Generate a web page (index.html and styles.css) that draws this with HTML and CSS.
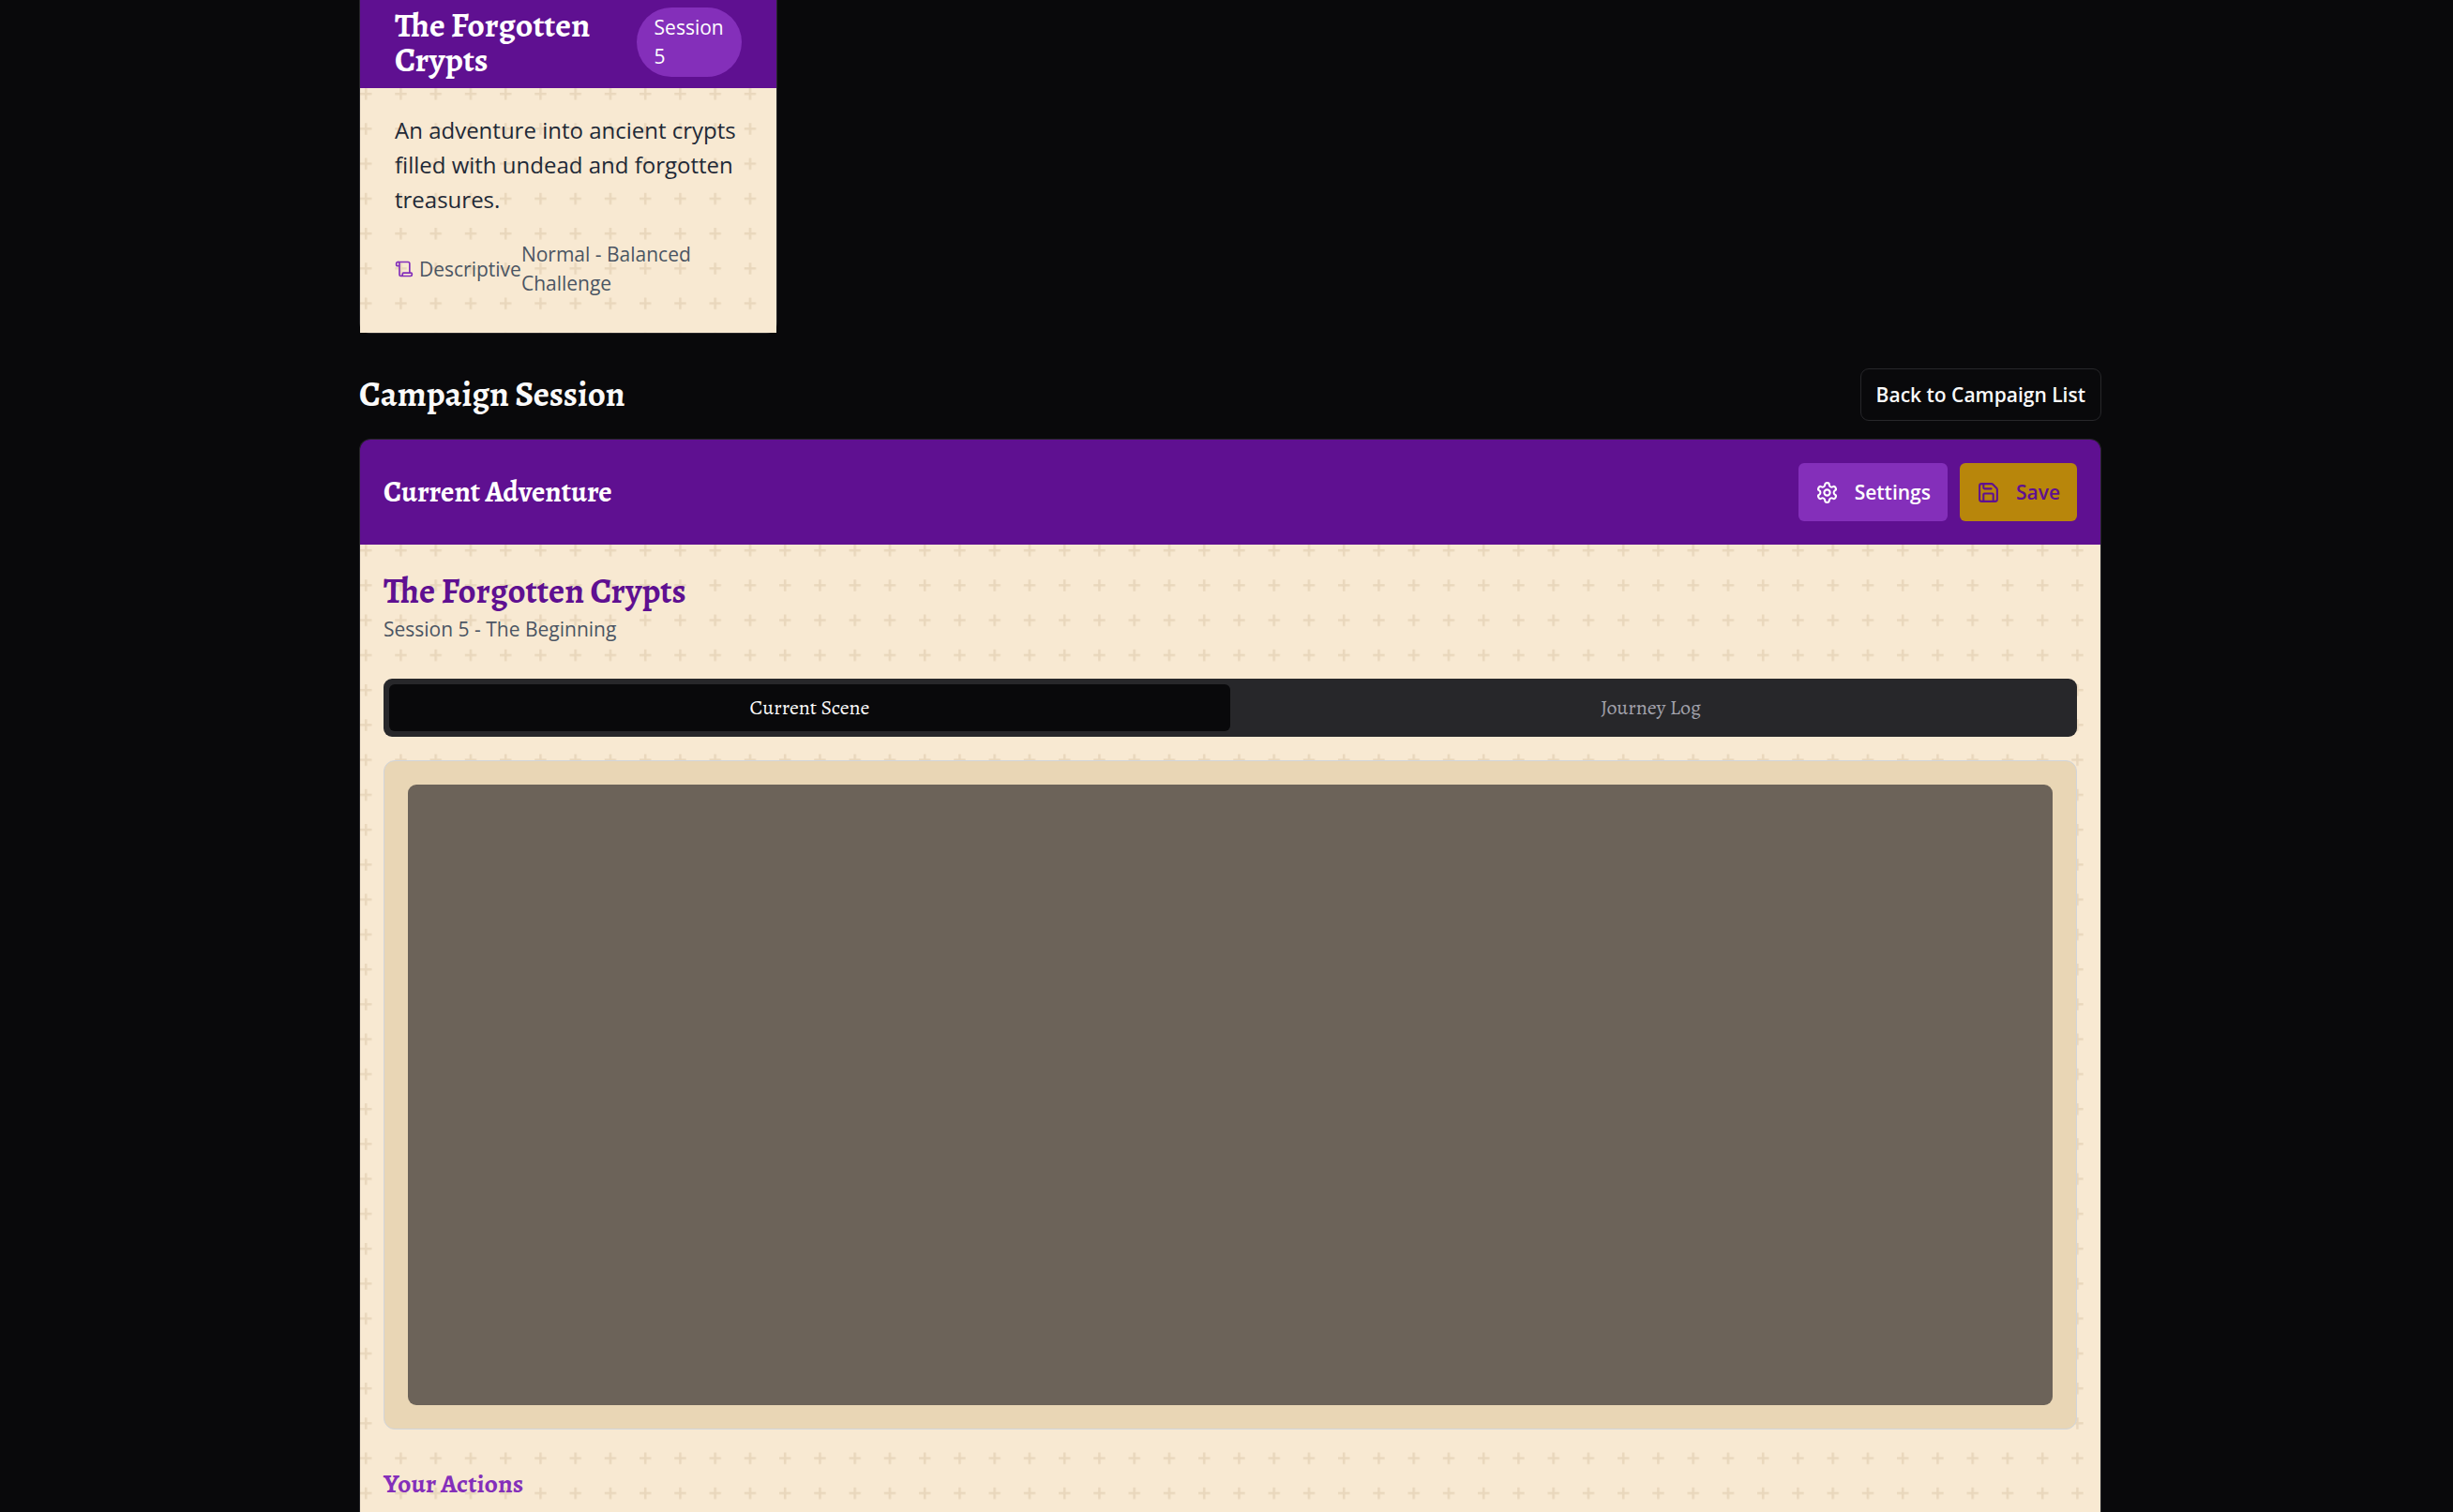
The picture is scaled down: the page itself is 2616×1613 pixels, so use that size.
FILE: index.html
```html
<!DOCTYPE html>
<html lang="en">
<head>
  <meta charset="utf-8">
  <meta name="viewport" content="width=device-width, initial-scale=1">
  <title>Campaign Session</title>
  <link rel="stylesheet" href="styles.css">
</head>
<body>
  <main class="page">
    <section class="campaign-list" aria-label="Campaigns">
      <article class="card campaign">
        <header class="campaign-header">
          <h2 class="campaign-title">The Forgotten Crypts</h2>
          <span class="badge">Session 5</span>
        </header>
        <div class="parchment campaign-body">
          <p class="campaign-text">An adventure into ancient crypts filled with undead and forgotten treasures.</p>
          <div class="campaign-meta">
            <span class="style-label">
              <svg class="icon-small" viewBox="0 0 24 24" aria-hidden="true">
                <path d="M19 17V5a2 2 0 0 0-2-2H4"/>
                <path d="M8 21h12a2 2 0 0 0 2-2v-1a1 1 0 0 0-1-1H11a1 1 0 0 0-1 1v1a2 2 0 1 1-4 0V5a2 2 0 1 0-4 0v2a1 1 0 0 0 1 1h3"/>
              </svg>
              Descriptive
            </span>
            <span>Normal - Balanced Challenge</span>
          </div>
        </div>
      </article>
    </section>

    <div class="page-bar">
      <h1 class="page-title">Campaign Session</h1>
      <button class="button button-outline" type="button">Back to Campaign List</button>
    </div>

    <section class="card adventure">
      <header class="adventure-header">
        <h2 class="adventure-title">Current Adventure</h2>
        <div class="actions">
          <button class="button button-settings" type="button">
            <svg class="icon" viewBox="0 0 24 24" aria-hidden="true">
              <path d="M12.22 2h-.44a2 2 0 0 0-2 2v.18a2 2 0 0 1-1 1.73l-.43.25a2 2 0 0 1-2 0l-.15-.08a2 2 0 0 0-2.73.73l-.22.38a2 2 0 0 0 .73 2.73l.15.1a2 2 0 0 1 1 1.72v.51a2 2 0 0 1-1 1.74l-.15.09a2 2 0 0 0-.73 2.73l.22.38a2 2 0 0 0 2.73.73l.15-.08a2 2 0 0 1 2 0l.43.25a2 2 0 0 1 1 1.73V20a2 2 0 0 0 2 2h.44a2 2 0 0 0 2-2v-.18a2 2 0 0 1 1-1.73l.43-.25a2 2 0 0 1 2 0l.15.08a2 2 0 0 0 2.73-.73l.22-.39a2 2 0 0 0-.73-2.73l-.15-.08a2 2 0 0 1-1-1.74v-.5a2 2 0 0 1 1-1.74l.15-.09a2 2 0 0 0 .73-2.73l-.22-.38a2 2 0 0 0-2.73-.73l-.15.08a2 2 0 0 1-2 0l-.43-.25a2 2 0 0 1-1-1.73V4a2 2 0 0 0-2-2z"/>
              <circle cx="12" cy="12" r="3"/>
            </svg>
            Settings
          </button>
          <button class="button button-save" type="button">
            <svg class="icon" viewBox="0 0 24 24" aria-hidden="true">
              <path d="M15.2 3a2 2 0 0 1 1.4.6l3.8 3.8a2 2 0 0 1 .6 1.4V19a2 2 0 0 1-2 2H5a2 2 0 0 1-2-2V5a2 2 0 0 1 2-2z"/>
              <path d="M17 21v-7a1 1 0 0 0-1-1H8a1 1 0 0 0-1 1v7"/>
              <path d="M7 3v4a1 1 0 0 0 1 1h7"/>
            </svg>
            Save
          </button>
        </div>
      </header>

      <div class="parchment adventure-body">
        <h3 class="adventure-name">The Forgotten Crypts</h3>
        <p class="adventure-session">Session 5 - The Beginning</p>

        <div class="tabs" role="tablist">
          <button class="tab tab-active" type="button" role="tab" aria-selected="true">Current Scene</button>
          <button class="tab" type="button" role="tab" aria-selected="false">Journey Log</button>
        </div>

        <div class="scene" role="tabpanel" aria-label="Current Scene">
          <div class="scene-view"></div>
        </div>

        <h4 class="actions-title">Your Actions</h4>
      </div>
    </section>
  </main>
</body>
</html>
```
FILE: styles.css
```css
:root {
  --background: #09090b;
  --border: #27272a;
  --purple: #5f1091;
  --purple-light: #842fba;
  --gold: #b8860b;
  --parchment: #f8e9d2;
  --parchment-dark: #e9d6b5;
  --serif: "Alegreya", "Liberation Serif", serif;
  --sans: "Segoe UI", "Open Sans", sans-serif;
}

*,
*::before,
*::after {
  box-sizing: border-box;
}

body {
  margin: 0;
  background: var(--background);
  color: #fafafa;
  font-family: var(--sans);
  font-size: 21px;
  line-height: 31px;
}

h1, h2, h3, h4, p {
  margin: 0;
}

h1, h2, h3, h4 {
  font-family: var(--serif);
  font-weight: 700;
}

button {
  border: 0;
  font: inherit;
  cursor: pointer;
}

.page {
  display: flex;
  flex-direction: column;
  min-height: 100vh;
  padding: 0 375px 0 383px;
}

.card {
  border: 1px solid var(--border);
}

.parchment {
  background-color: var(--parchment);
  background-image: url("data:image/svg+xml,%3Csvg xmlns='http://www.w3.org/2000/svg' width='149' height='149' viewBox='0 0 120 120'%3E%3Cdefs%3E%3Cpattern id='p' width='30' height='30' patternUnits='userSpaceOnUse'%3E%3Cpath fill='%23e9d7bc' d='M6 4V0H4v4H0v2h4v4h2V6h4V4H6z'/%3E%3C/pattern%3E%3C/defs%3E%3Crect width='120' height='120' fill='url(%23p)'/%3E%3C/svg%3E");
  background-size: 149px 149px;
}

/* Campaign cards */

.campaign-list {
  display: grid;
  grid-template-columns: repeat(4, 1fr);
  gap: 25px;
}

.campaign {
  border-top: 0;
  border-radius: 0 0 12px 12px;
}

.campaign-header {
  display: flex;
  align-items: center;
  justify-content: space-between;
  gap: 12px;
  padding: 8px 37px 12px;
  background: var(--purple);
}

.campaign-title {
  color: #fff;
  font-size: 36px;
  line-height: 37px;
}

.badge {
  width: min-content;
  padding: 6px 19px;
  border-radius: 38px;
  background: var(--purple-light);
  color: #fff;
}

.campaign-body {
  padding: 26px 37px 37px;
}

.campaign-text {
  color: #1f2937;
  font-size: 24px;
  line-height: 37px;
}

.campaign-meta {
  display: flex;
  align-items: center;
  justify-content: space-between;
  margin-top: 25px;
  color: #4b5563;
}

.style-label {
  display: flex;
  align-items: center;
  gap: 6px;
}

.icon,
.icon-small {
  flex: none;
  fill: none;
  stroke: currentColor;
  stroke-width: 2;
  stroke-linecap: round;
  stroke-linejoin: round;
}

.icon {
  width: 25px;
  height: 25px;
}

.icon-small {
  width: 20px;
  height: 20px;
  color: var(--purple-light);
}

/* Title bar */

.page-bar {
  display: flex;
  align-items: center;
  justify-content: space-between;
  margin: 37px 0 19px;
}

.page-title {
  font-size: 37px;
  line-height: 50px;
}

.button {
  display: flex;
  align-items: center;
  gap: 17px;
  height: 62px;
  padding: 0 18px;
  border-radius: 6px;
  font-weight: 600;
}

.button-outline {
  height: 56px;
  padding: 0 16px;
  border: 1px solid var(--border);
  border-radius: 9px;
  background: var(--background);
  color: #fafafa;
}

.button-settings {
  background: var(--purple-light);
  color: #fff;
}

.button-save {
  background: var(--gold);
  color: var(--purple);
}

/* Current adventure */

.adventure {
  display: flex;
  flex: 1;
  flex-direction: column;
  overflow: hidden;
  border-bottom: 0;
  border-radius: 12px 12px 0 0;
}

.adventure-header {
  display: flex;
  align-items: center;
  justify-content: space-between;
  padding: 25px;
  background: var(--purple);
}

.adventure-title {
  color: #fff;
  font-size: 31px;
  line-height: 43px;
}

.actions {
  display: flex;
  gap: 13px;
}

.adventure-body {
  flex: 1;
  padding: 25px 25px 0;
}

.adventure-name {
  color: var(--purple);
  font-size: 37px;
  line-height: 50px;
}

.adventure-session {
  color: #4b5563;
}

.tabs {
  display: grid;
  grid-template-columns: 1fr 1fr;
  margin: 37px 0 25px;
  padding: 6px;
  border-radius: 9px;
  background: var(--border);
}

.tab {
  height: 50px;
  border-radius: 6px;
  background: transparent;
  color: #a1a1aa;
  font-family: var(--serif);
  font-size: 22px;
}

.tab-active {
  background: var(--background);
  color: #fafafa;
}

.scene {
  padding: 25px;
  border: 1px solid #d1d5db;
  border-radius: 12px;
  background: var(--parchment-dark);
}

.scene-view {
  height: 662px;
  border-radius: 9px;
  background: #6c6359;
}

.actions-title {
  margin-top: 37px;
  color: var(--purple-light);
  font-size: 28px;
  line-height: 43px;
}
```
